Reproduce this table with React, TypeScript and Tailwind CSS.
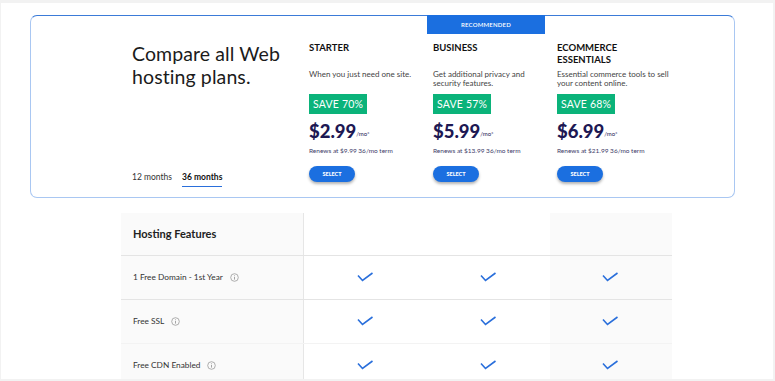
import React from 'react'

const plans = [
    {
        name: "Starter",
        desc: "When you just need one site.",
        save: "SAVE 70%",
        price: "$2.99",
        renew: "Renews at $9.99 36/mo term",
    },
    {
        name: "Business",
        desc: "Get additional privacy and security features.",
        save: "SAVE 57%",
        price: "$5.99",
        renew: "Renews at $13.99 36/mo term",
        recommended: true,
    },
    {
        name: "Ecommerce Essentials",
        desc: "Essential commerce tools to sell your content online.",
        save: "SAVE 68%",
        price: "$6.99",
        renew: "Renews at $21.99 36/mo term",
    },
]

const features = ["1 Free Domain - 1st Year", "Free SSL", "Free CDN Enabled"]

function Check() {
    return (
        <svg width="17" height="11" viewBox="0 0 17 11" fill="none">
            <path d="M1 3.5L5.5 8.5L15.5 1" stroke="#2a6fdb" strokeWidth="1.6" />
        </svg>
    )
}

function Info() {
    return (
        <svg width="9" height="9" viewBox="0 0 9 9" fill="none" className="ml-[7px]">
            <circle cx="4.5" cy="4.5" r="3.8" stroke="#9a9a9a" strokeWidth="0.8" />
            <path d="M4.5 4v2.6" stroke="#9a9a9a" strokeWidth="0.9" />
            <circle cx="4.5" cy="2.7" r="0.5" fill="#9a9a9a" />
        </svg>
    )
}

export default function App() {
    return (
        <main className="w-[775px] h-[381px] overflow-hidden bg-[#f2f2f2] pt-[3px] pl-px pr-[2px] pb-[2px] font-['Lato',sans-serif]">
            <div className="h-full bg-white overflow-hidden">

                {/* Plan card */}
                <div className="ml-[29px] mt-[12px] w-[705px] h-[183px] rounded-[7px] border border-[#a9c7f2] border-t-[#3b7bd8] flex relative">
                    <div className="w-[272px] pl-[101px] pt-[26px] flex flex-col justify-between pb-[12px]">
                        <h1 className="text-[19.5px] leading-[23px] text-[#1b1b1b] tracking-[0.1px]">Compare all Web hosting plans.</h1>
                        <div className="flex items-center gap-[10px] text-[8.5px] text-[#333]">
                            <span>12 months</span>
                            <span className="font-bold text-[#111] border-b border-[#2a6fdb] pb-[2px] translate-y-[2px]">36 months</span>
                        </div>
                    </div>

                    {plans.map((p) => (
                        <div key={p.name} className="w-[124px] relative pl-[6px] pt-[26px]">
                            {p.recommended && (
                                <div className="absolute -top-px left-0 w-[118px] h-[19px] bg-[#1b6fe0] text-white text-[6px] font-semibold tracking-[0.2px] flex items-center justify-center">
                                    RECOMMENDED
                                </div>
                            )}
                            <h2 className="text-[9.5px] leading-[12px] font-bold uppercase text-[#111] h-[24px] pr-[20px]">{p.name}</h2>
                            <p className="mt-[4px] text-[8px] leading-[9px] text-[#444] h-[20px] pr-[4px]">{p.desc}</p>
                            <div className="mt-[4px] inline-block bg-[#0bb37a] text-white text-[10.5px] leading-[20px] px-[4px] tracking-[0.2px]">{p.save}</div>
                            <div className="mt-[7px] flex items-end text-[#1d1853]">
                                <span className="text-[18.5px] leading-[20px] font-black">{p.price}</span>
                                <span className="text-[6px] mb-[3px]">/mo*</span>
                            </div>
                            <p className="mt-[5px] text-[6.5px] text-[#3e3b68]">{p.renew}</p>
                            <button className="mt-[10px] w-[46px] h-[16px] rounded-full bg-[#1b6fe0] text-white text-[5.5px] font-black shadow-[0_2px_3px_rgba(0,0,0,0.3)]">
                                SELECT
                            </button>
                        </div>
                    ))}
                </div>

                {/* Feature table */}
                <div className="ml-[120px] mt-[15px] w-[551px] text-[#222]">
                    <div className="flex h-[42px]">
                        <div className="w-[183px] bg-[#fafafa] border-r border-[#e6e6e6] pl-[12px] flex items-center text-[11px] font-bold text-[#222]">Hosting Features</div>
                        <div className="w-[123px]" />
                        <div className="w-[123px]" />
                        <div className="w-[122px] bg-[#fafafa]" />
                    </div>
                    {features.map((f, i) => (
                        <div key={f} className={`flex h-[44px] border-t ${i < 2 ? 'border-[#e4e4e4]' : 'border-[#f3f3f3]'}`}>
                            <div className="w-[183px] bg-[#fafafa] border-r border-[#e6e6e6] pl-[12px] flex items-center text-[8.3px] text-[#333]">
                                {f}
                                <Info />
                            </div>
                            <div className="w-[123px] flex items-center justify-center pr-[1px]"><Check /></div>
                            <div className="w-[123px] flex items-center justify-center pr-[1px]"><Check /></div>
                            <div className="w-[122px] bg-[#fafafa] flex items-center justify-center pr-[1px]"><Check /></div>
                        </div>
                    ))}
                </div>

            </div>
        </main>
    )
}
